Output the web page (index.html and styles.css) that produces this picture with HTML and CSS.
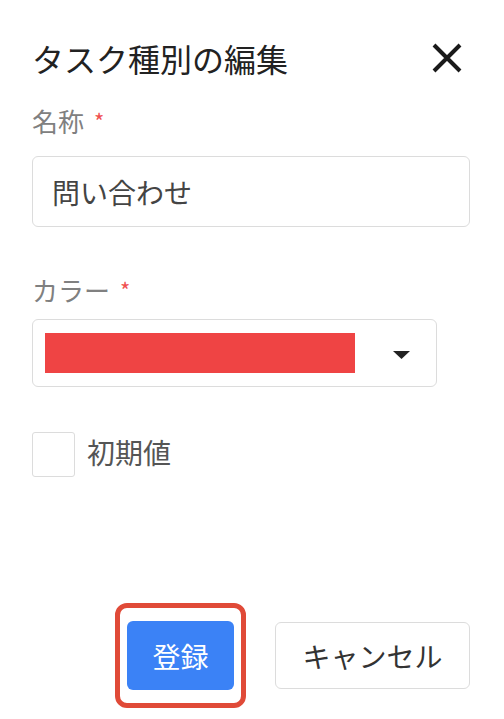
FILE: index.html
```html
<!DOCTYPE html>
<html lang="ja">
<head>
<meta charset="utf-8">
<link rel="stylesheet" href="styles.css">
</head>
<body>
<div class="dialog">
  <div class="header">
    <h1 class="title">タスク種別の編集</h1>
    <button class="close" aria-label="閉じる">
      <svg width="30" height="30" viewBox="0 0 30 30"><path d="M2 2 L28 28 M28 2 L2 28" stroke="#1a1a1a" stroke-width="4" stroke-linecap="butt" fill="none"/></svg>
    </button>
  </div>

  <div class="label label-name">名称<span class="req">*</span></div>
  <div class="input">問い合わせ</div>

  <div class="label label-color">カラー<span class="req">*</span></div>
  <div class="select">
    <div class="swatch"></div>
    <svg class="caret" width="17" height="8" viewBox="0 0 17 8"><path d="M0 0 H17 L8.5 8 Z" fill="#222"/></svg>
  </div>

  <label class="check-row">
    <span class="checkbox"></span>
    <span class="check-label">初期値</span>
  </label>

  <div class="actions">
    <div class="highlight">
      <button class="btn btn-primary">登録</button>
    </div>
    <button class="btn btn-default">キャンセル</button>
  </div>
</div>
</body>
</html>
```

FILE: styles.css
```css
* { box-sizing: border-box; }
html, body {
  margin: 0;
  padding: 0;
  background: #fff;
}
body {
  font-family: "Noto Sans CJK JP", "Noto Sans", sans-serif;
  width: 504px;
  height: 719px;
  overflow: hidden;
}
.dialog {
  padding: 38px 34px 0 32px;
}
.header {
  display: flex;
  align-items: center;
  justify-content: space-between;
  height: 40px;
}
.title {
  margin: 0;
  font-size: 32px;
  font-weight: 400;
  line-height: 40px;
  color: #222;
}
.close {
  border: 0;
  background: none;
  padding: 0;
  margin-right: 8px;
  width: 30px;
  height: 30px;
  display: flex;
}
.label {
  font-size: 26px;
  line-height: 34px;
  color: #808080;
  display: flex;
  align-items: flex-start;
}
.label-name { margin-top: 26px; }
.label-color { margin-top: 46px; }
.req {
  color: #f05050;
  font-size: 22px;
  line-height: 22px;
  margin-left: 10px;
  margin-top: 5px;
}
.input {
  margin-top: 18px;
  height: 71px;
  border: 1.5px solid #dcdcdc;
  border-radius: 6px;
  padding: 0 19px;
  display: flex;
  align-items: center;
  font-size: 28px;
  color: #444;
}
.select {
  margin-top: 12px;
  width: 405px;
  height: 68px;
  border: 1.5px solid #dcdcdc;
  border-radius: 6px;
  padding: 0 26px 0 12px;
  display: flex;
  align-items: center;
  justify-content: space-between;
}
.swatch {
  width: 310px;
  height: 40px;
  background: #ef4444;
}
.caret { display: block; margin-top: 4px; }
.check-row {
  margin-top: 45px;
  display: flex;
  align-items: center;
}
.checkbox {
  width: 43px;
  height: 45px;
  border: 1.5px solid #dcdcdc;
  border-radius: 3px;
  display: block;
}
.check-label {
  margin-left: 12px;
  font-size: 28px;
  color: #555;
  margin-top: -5px;
}
.actions {
  margin-top: 126px;
  display: flex;
  justify-content: flex-end;
  align-items: center;
  gap: 29px;
}
.highlight {
  border: 5px solid #e04a38;
  border-radius: 12px;
  padding: 13px 7px;
  display: flex;
}
.btn {
  font-family: "Noto Sans CJK JP", "Noto Sans", sans-serif;
  font-size: 28px;
  border-radius: 6px;
  display: flex;
  align-items: center;
  justify-content: center;
  padding: 0;
}
.btn-primary {
  width: 107px;
  height: 69px;
  background: #3b82f6;
  color: #fff;
  border: 0;
}
.btn-default {
  width: 195px;
  height: 67px;
  background: #fff;
  color: #333;
  border: 1.5px solid #dcdcdc;
}
```
